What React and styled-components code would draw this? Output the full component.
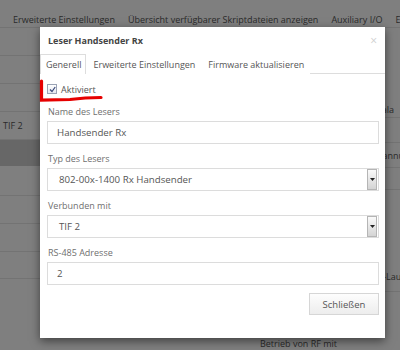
import React from 'react';
import styled, { createGlobalStyle } from 'styled-components';

const GlobalStyle = createGlobalStyle`
  html, body { margin: 0; padding: 0; }
  body {
    font-family: "Open Sans", "Liberation Sans", sans-serif;
    background: #fff;
  }
`;

const Page = styled.div`
  position: relative;
  width: 400px;
  height: 350px;
  overflow: hidden;
  background: #fff;
  font-size: 9px;
  color: #555;
`;

const Nav = styled.div`
  display: flex;
  gap: 13px;
  height: 26px;
  align-items: flex-end;
  padding: 0 0 1px 13px;
  border-bottom: 1px solid #e6e6e6;
  white-space: nowrap;
  color: #555;
`;

const Body = styled.div`
  display: grid;
  grid-template-columns: 1fr 70px;
`;

const LeftTable = styled.div`
  display: flex;
  flex-direction: column;
`;

const Row = styled.div`
  height: ${p => p.h || 27}px;
  border-bottom: 1px solid ${p => (p.band ? '#cfcfcf' : '#e6e6e6')};
  background: ${p => (p.band ? '#cfcfcf' : 'transparent')};
  display: flex;
  align-items: center;
  padding-left: 3px;
  color: #555;
`;

const RightCol = styled.div`
  display: flex;
  flex-direction: column;
`;

const RightCell = styled.div`
  height: ${p => p.h}px;
  box-sizing: border-box;
  border-bottom: 1px solid ${p => (p.line ? '#e6e6e6' : 'transparent')};
  display: flex;
  align-items: ${p => p.align || 'center'};
  white-space: nowrap;
  padding-left: ${p => p.indent || 42}px;
  padding-bottom: ${p => p.bottom || 0}px;
  color: #555;
`;

const Footnote = styled.div`
  position: absolute;
  left: 260px;
  top: 337px;
  color: #555;
  white-space: nowrap;
`;

const Overlay = styled.div`
  position: absolute;
  inset: 0;
  background: rgba(0, 0, 0, 0.5);
`;

const Modal = styled.div`
  position: absolute;
  left: 40px;
  top: 27px;
  width: 345px;
  height: 311px;
  background: #fff;
  box-shadow: 0 3px 9px rgba(0, 0, 0, 0.5);
  display: flex;
  flex-direction: column;
`;

const Header = styled.div`
  height: 27px;
  display: flex;
  align-items: center;
  justify-content: space-between;
  padding: 0 8px 0 8px;
`;

const Title = styled.div`
  font-weight: 700;
  font-size: 9px;
  color: #444;
`;

const Close = styled.div`
  color: #d0d0d0;
  font-size: 12px;
  line-height: 1;
`;

const Tabs = styled.div`
  display: flex;
  height: 19px;
  border-bottom: 1px solid #ddd;
`;

const Tab = styled.div`
  display: flex;
  align-items: center;
  padding: ${p => (p.active ? '0 4px 0 5px' : '0 5px 0 6px')};
  background: #fff;
  color: #555;
  border: 1px solid ${p => (p.active ? '#ddd' : 'transparent')};
  border-bottom: none;
  box-sizing: border-box;
  height: 20px;
  white-space: nowrap;
`;

const Content = styled.div`
  position: relative;
  padding: 9px 6px 0 7px;
  display: flex;
  flex-direction: column;
`;

const CheckRow = styled.label`
  display: flex;
  align-items: center;
  gap: 4px;
  height: 12px;
  margin-bottom: 11px;
  color: #555;
`;

const Check = styled.span`
  width: 8px;
  height: 8px;
  border: 1px solid #9aa3b5;
  background: linear-gradient(#fff, #e4e8f0);
  display: flex;
  align-items: center;
  justify-content: center;
`;

const Label = styled.div`
  color: #6f6f6f;
  padding-left: 1px;
  height: 12px;
  line-height: 12px;
  margin-bottom: 3px;
`;

const Field = styled.div`
  height: 23px;
  box-sizing: border-box;
  border: 1px solid #dcdcdc;
  display: flex;
  align-items: center;
  justify-content: space-between;
  padding-left: ${p => p.pad || 9}px;
  padding-right: 1px;
  font-size: 9.7px;
  color: #555;
  margin-bottom: 9px;
`;

const DropButton = styled.span`
  width: 10px;
  height: 21px;
  box-sizing: border-box;
  border: 1px solid #b5b5b5;
  background: linear-gradient(#fafafa, #d4d4d4);
  display: flex;
  align-items: center;
  justify-content: center;
`;

const Footer = styled.div`
  display: flex;
  justify-content: flex-end;
  margin-top: -1px;
`;

const Button = styled.div`
  width: 70px;
  height: 22px;
  box-sizing: border-box;
  border: 1px solid #d6d6d6;
  background: linear-gradient(#fdfdfd, #ededed);
  display: flex;
  align-items: center;
  justify-content: center;
  color: #555;
  font-size: 9.5px;
`;

const Marker = styled.svg`
  position: absolute;
  left: 0;
  top: 0;
  overflow: visible;
  pointer-events: none;
`;

const Caret = () => (
  <svg width="5" height="3" viewBox="0 0 5 3">
    <path d="M0 0 L5 0 L2.5 3 Z" fill="#222" />
  </svg>
);

const Select = ({ value }) => (
  <Field pad={11}>
    <span>{value}</span>
    <DropButton>
      <Caret />
    </DropButton>
  </Field>
);

export default function App() {
  return (
    <>
      <GlobalStyle />
      <Page>
        <Nav>
          <span>Erweiterte Einstellungen</span>
          <span>Übersicht verfügbarer Skriptdateien anzeigen</span>
          <span>Auxiliary I/O</span>
          <span>E</span>
        </Nav>
        <Body>
          <LeftTable>
            <Row />
            <Row />
            <Row />
            <Row>TIF 2</Row>
            <Row band h={25} />
            <Row h={29} />
            <Row />
            <Row />
            <Row h={26} />
          </LeftTable>
          <RightCol>
            <RightCell h={90} line align="flex-end" bottom={1}>Skala</RightCell>
            <RightCell h={25} line />
            <RightCell h={25} line>Spannung</RightCell>
            <RightCell h={22} line />
            <RightCell h={102} line align="flex-end" indent={43} bottom={8}>RF-Lauf</RightCell>
          </RightCol>
        </Body>
        <Footnote>Betrieb von RF mit</Footnote>
        <Overlay />
        <Modal>
          <Header>
            <Title>Leser Handsender Rx</Title>
            <Close>×</Close>
          </Header>
          <Tabs>
            <Tab active>Generell</Tab>
            <Tab>Erweiterte Einstellungen</Tab>
            <Tab>Firmware aktualisieren</Tab>
          </Tabs>
          <Content>
            <CheckRow>
              <Check>
                <svg width="7" height="7" viewBox="0 0 7 7">
                  <path d="M1 3.5 L3 5.5 L6.2 1" stroke="#3a4a7a" strokeWidth="1.2" fill="none" />
                </svg>
              </Check>
              Aktiviert
            </CheckRow>
            <Label>Name des Lesers</Label>
            <Field>Handsender Rx</Field>
            <Label>Typ des Lesers</Label>
            <Select value="802-00x-1400 Rx Handsender" />
            <Label>Verbunden mit</Label>
            <Select value="TIF 2" />
            <Label>RS-485 Adresse</Label>
            <Field>2</Field>
            <Footer>
              <Button>Schließen</Button>
            </Footer>
            <Marker width="70" height="30">
              <path
                d="M1.5 7 L1.5 26 L30 25.5 Q45 23.5 61 23.5"
                stroke="#e60000"
                strokeWidth="3.2"
                fill="none"
                strokeLinecap="round"
              />
            </Marker>
          </Content>
        </Modal>
      </Page>
    </>
  );
}
